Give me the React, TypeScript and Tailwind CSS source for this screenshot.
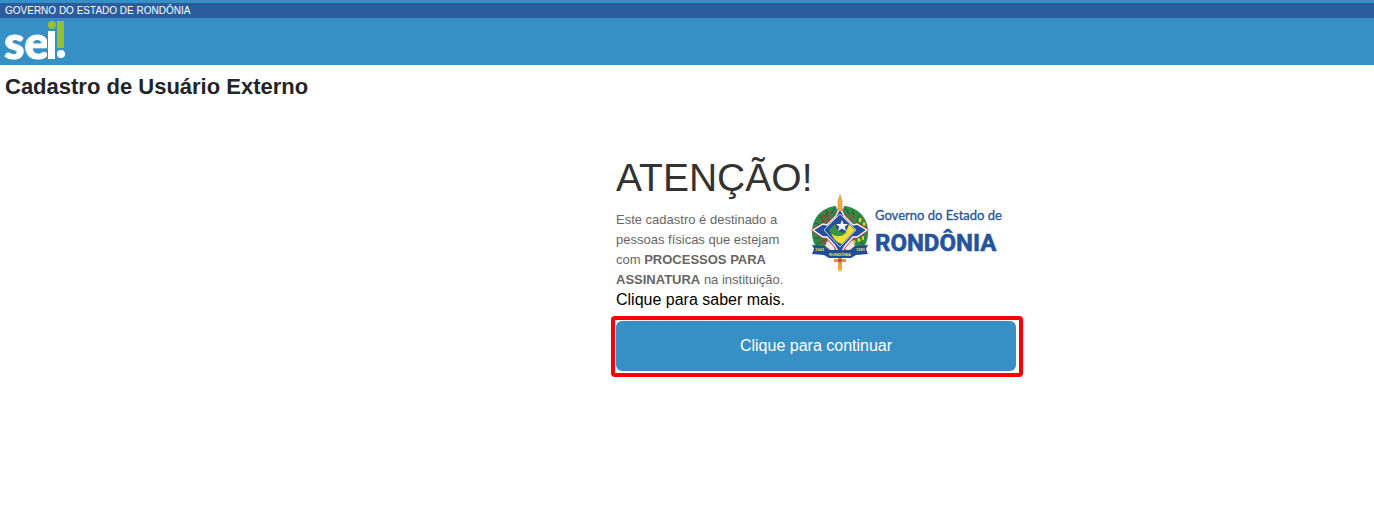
const BLUE = '#24549c';
const STAR = 'M29 12 L33 21 L42 30 L46 29 L56 35 L46 42 L42 42 L34 51 L29 60 L24 51 L16 42 L12 42 L2 35 L12 29 L16 30 L25 21 Z';

function SeiLogo() {
  return (
    <svg width="62" height="42" viewBox="0 0 62 42" role="img" aria-label="sei!" className="block overflow-visible">
      <text x="-1" y="38" fill="#fff" stroke="#fff" strokeWidth="1" fontSize="46" fontWeight="900" fontFamily="Lato, sans-serif">
        sei
      </text>
      <rect x="42" y="0" width="20" height="42" fill="#3790c5" />
      <rect x="43" y="10" width="7" height="28" fill="#fff" />
      <circle cx="47" cy="4" r="4" fill="#96bf31" />
      <rect x="52" y="0" width="7" height="27" fill="#96bf31" />
      <circle cx="56" cy="33" r="4" fill="#fff" />
    </svg>
  );
}

function CoatOfArms() {
  return (
    <g>
      {/* wreath */}
      <path d="M25 11 C12 12 1 22 1 37 C1 46 4 53 11 58 L28 58 L28 22 Z" fill="#2f8a45" />
      <path d="M33 11 C46 12 57 22 57 37 C57 46 54 53 47 58 L30 58 L30 22 Z" fill="#2f8a45" />
      <path d="M24 13 L20 19 M16 15 L15 23 M9 20 L12 28 M4 28 L9 30 M3 43 L9 43 M5 49 L11 46 M34 13 L38 19 M42 15 L43 23 M49 20 L46 28 M54 28 L49 30 M55 43 L49 43 M53 49 L47 46" stroke="#1c6132" strokeWidth="1" fill="none" />
      <path d="M13 18 L13 28 M17 16 L17 27 M11 21 L19 21 M11 25 L20 25 M9 46 L16 46 M11 43 L15 51 M16 48 L20 53" stroke="#a5383a" strokeWidth="1" />
      <path d="M40 16 L40 26 M44 17 L44 27 M39 21 L45 21 M39 25 L45 25" stroke="#7a6a3c" strokeWidth="1" />
      <g fill="#e2d634">
        <ellipse cx="49" cy="25" rx="1.5" ry="2.2" />
        <ellipse cx="53" cy="29" rx="1.3" ry="2" />
        <ellipse cx="48" cy="45" rx="1.5" ry="2" />
        <ellipse cx="52" cy="43" rx="1.3" ry="2" />
        <ellipse cx="43" cy="47" rx="1.5" ry="2" />
      </g>
      <path d="M17 45 L25 52 L22 57 L14 51 Z M41 45 L33 52 L36 57 L44 51 Z" fill="#f2ecea" stroke="#c99b98" strokeWidth="0.8" />
      {/* star */}
      <path d={STAR} stroke="#d02c3a" strokeWidth="3" fill="none" strokeLinejoin="round" />
      <path d={STAR} stroke="#fff" strokeWidth="1.4" fill="#2550a0" />
      <path d="M29 19 L45 35 L29 52 L13 35 Z" fill="#2550a0" stroke="#e9eef6" strokeWidth="0.8" />
      <path d="M20 38 C27 43 34 43 38 29 L44 35 L31 49 C26 48 22 43 20 38 Z" fill="#f2df35" />
      <path d="M18 35 L24 29 C25 36 30 39 36 37 C32 42 25 43 19 37 Z" fill="#3c963d" />
      <path d="M31 25 L32.6 29 L37 29 L33.7 31.7 L35 36 L31 33.5 L27 36 L28.3 31.7 L25 29 L29.4 29 Z" fill="#fff" />
      {/* sword */}
      <path d="M29 0 L31 6 L31 13 L29 17 L27 13 L27 6 Z" fill="#eab13e" stroke="#d9813a" strokeWidth="0.6" />
      <path d="M27 63 H31 V74 L29 77 L27 74 Z" fill="#e9a33b" />
      <path d="M23 64 H35 V67 H23 Z" fill="#e58f3c" />
      <circle cx="29" cy="65.5" r="2" fill="#c94a35" />
      <circle cx="29" cy="74" r="2" fill="#eab13e" />
      {/* ribbon */}
      <path d="M1 50 L14 51 L18 55 H40 L44 51 L57 50 L55 54 L57 59 L45 60 L40 63 H18 L13 60 L1 59 L3 54 Z" fill="#204d94" />
      <g fill="#f0e55a" fontFamily="'Liberation Sans', sans-serif" fontWeight="700" fontSize="4">
        <text x="4" y="56">1943</text>
        <text x="45" y="56">1981</text>
        <text x="18" y="61">RONDÔNIA</text>
      </g>
    </g>
  );
}

function GovernmentLogo() {
  return (
    <svg width="192" height="78" viewBox="0 0 192 78" role="img" aria-label="Governo do Estado de Rondônia" className="block shrink-0">
      <CoatOfArms />
      <g fill={BLUE}>
        <text x="64" y="25" fontSize="13" fontFamily="Lato, sans-serif" stroke={BLUE} strokeWidth="0.3">Governo do Estado de</text>
        <text x="64" y="56" fontSize="24" fontWeight="700" fontFamily="Roboto, sans-serif" stroke={BLUE} strokeWidth="0.6">RONDÔNIA</text>
      </g>
    </svg>
  );
}

export default function App() {
  return (
    <div className="bg-white font-['Liberation_Sans',Arial,sans-serif] text-[#212529]">
      <header className="bg-[#3790c5] pt-[3px]">
        <div className="bg-[#2b5d9e] px-[5px] text-[10px] leading-[15px] text-white">GOVERNO DO ESTADO DE RONDÔNIA</div>
        <div className="px-[5px] pt-[3px] pb-[2px]">
          <SeiLogo />
        </div>
      </header>

      <main>
        <h1 className="px-[5px] pt-2 text-[22px] leading-7 font-bold">Cadastro de Usuário Externo</h1>

        <div className="flex justify-center pt-[53px] pl-65">
          <section className="w-full max-w-[412px]">
            <div className="flex items-start px-[5px]">
              <div className="w-[195px] shrink-0">
                <h2 className="text-[39px] leading-[48px] whitespace-nowrap text-[#333]">ATENÇÃO!</h2>
                <p className="mt-2 w-[176px] text-[13px] leading-5 text-[#666]">
                  Este cadastro é destinado a pessoas físicas que estejam com <strong>PROCESSOS PARA ASSINATURA</strong> na instituição.
                </p>
                <a href="#saiba-mais" className="block text-base leading-5 whitespace-nowrap text-black">Clique para saber mais.</a>
              </div>
              <div className="pt-[41px]">
                <GovernmentLogo />
              </div>
            </div>

            <div className="mt-[6px] rounded-sm border-4 border-[#f00] pt-px pr-[3px] pb-[2px] pl-px">
              <button type="button" className="block w-full rounded-md bg-[#3790c5] text-base leading-[50px] text-white">
                Clique para continuar
              </button>
            </div>
          </section>
        </div>
      </main>
    </div>
  );
}
